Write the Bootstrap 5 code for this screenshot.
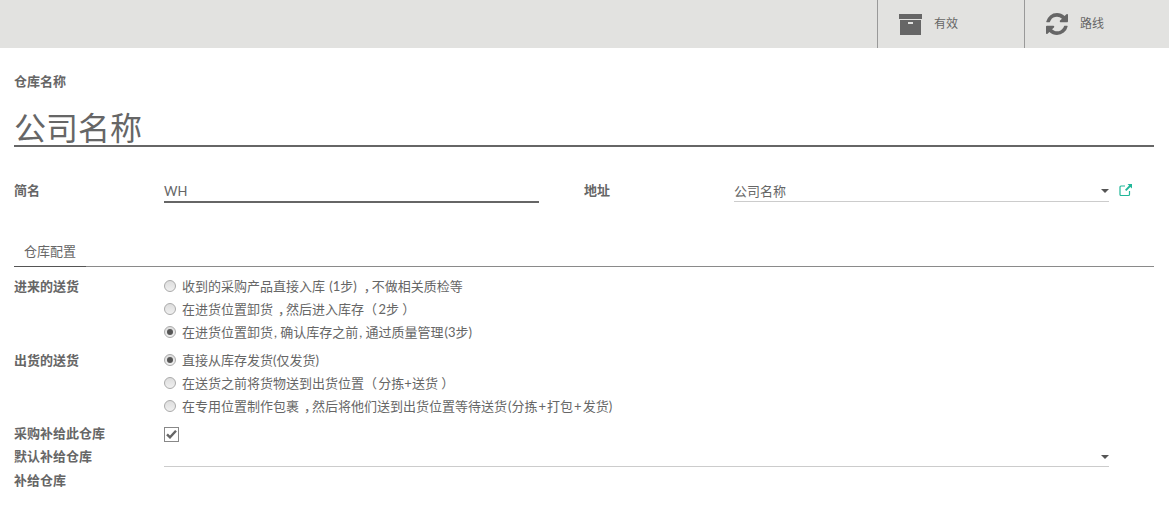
<!DOCTYPE html>
<html lang="zh">
<head>
<meta charset="utf-8">
<title>仓库</title>
<link href="https://cdn.jsdelivr.net/npm/bootstrap@5.3.0/dist/css/bootstrap.min.css" rel="stylesheet">
<style>
html,body{height:528px;overflow:hidden}
body{font-family:Lato,"Noto Sans CJK SC",sans-serif;font-size:13px;line-height:18px;color:#666;background:#fff}
.topbar{height:48px;background:#e2e2e0}
.stat{width:147px;height:48px;border-left:1px solid #999;padding-left:21px;gap:12px;color:#666;font-size:12px}
.stat-last{width:145px}
.sheet{padding:24px 15px 0 14px}
.cap{font-weight:700;height:18px}
.title{font-size:32px;line-height:40px;height:47px;margin-top:10px;padding-top:8px;border-bottom:2px solid #666;color:#666}
.pair{margin-top:33px;height:23px}
.lab{width:150px;flex:none;font-weight:700}
.pair .lab,.pair .lab2{padding-top:1px}
.lab2{width:150px;flex:none;font-weight:700;margin-left:45px}
.inp{width:375px;height:23px;border-bottom:2px solid #666;line-height:20px;padding-top:1px}
.sel{width:375px;height:22px;border-bottom:1px solid #ccc;line-height:20px;padding-top:1px;position:relative}
.arrow{position:absolute;right:0;top:9px;width:0;height:0;border-left:4px solid transparent;border-right:4px solid transparent;border-top:4px solid #555}
.ext{margin-left:10px;margin-top:3px}
.tabline{margin-top:27px;height:37px;border-bottom:1px solid #8a8a8a}
.tabitem{display:inline-block;width:72px;height:37px;padding:12px 0 0 10px;border-bottom:1px solid #555}
.opts{margin-top:7px}
.optrow{display:flex}
.optrow .lab{padding-top:3px}
.optlist{display:flex;flex-direction:column}
.opt{display:flex;align-items:center;height:23px;gap:6px}
.rad{width:12px;height:12px;border-radius:50%;border:1px solid #aaa;background:linear-gradient(#ddd,#f0f0f0);flex:none;display:flex;align-items:center;justify-content:center}
.rad-on::after{content:"";width:6px;height:6px;border-radius:50%;background:#555}
.gap1{margin-top:5px}
.chkrow{margin-top:6px;height:22px;display:flex;align-items:center}
.chkrow .lab,.rowb .lab,.rowc .lab{padding-bottom:2px}
.chk{width:15px;height:15px;border:1px solid #888;display:flex;align-items:center;justify-content:center;background:#fff}
.rowb{display:flex;height:24px;align-items:center}
.rowc{display:flex;height:24px;align-items:center}
.sel2{width:945px;height:22px;border-bottom:1px solid #ccc;position:relative;align-self:flex-start}
.sel2 .arrow{top:10px}
.cm{letter-spacing:-5px;margin-left:5px}
.cm1{letter-spacing:-5px;margin-left:6px}
.po{letter-spacing:-2px}
.wide{padding:0 1px}
.wd{padding-left:1px}
</style>
</head>
<body>
<div class="topbar d-flex justify-content-end overflow-hidden">
  <div class="stat d-flex align-items-center">
    <svg width="23" height="21" viewBox="0 0 23 21"><rect x="0" y="0" width="23" height="5" fill="#666"/><path d="M1 6h21v15H1z" fill="#666"/><rect x="9" y="8" width="5" height="2" fill="#e2e2e0"/></svg>
    <span>有效</span>
  </div>
  <div class="stat stat-last d-flex align-items-center">
    <svg width="22" height="22" viewBox="128 128 1536 1536"><path fill="#666" d="M1639 1056q0 5-1 7-64 268-268 434.500t-478 166.500q-146 0-282.500-55t-243.500-157l-129 129q-19 19-45 19t-45-19-19-45v-448q0-26 19-45t45-19h448q26 0 45 19t19 45-19 45l-137 137q71 66 161 102t187 36q134 0 250-65t186-179q11-17 53-117 8-23 30-23h192q13 0 22.500 9.500t9.500 22.500zm25-800v448q0 26-19 45t-45 19h-448q-26 0-45-19t-19-45 19-45l138-138q-148-137-349-137-134 0-250 65t-186 179q-11 17-53 117-8 23-30 23h-199q-13 0-22.500-9.500t-9.500-22.500v-7q65-268 270-434.500t480-166.500q146 0 284 55.500t245 156.500l130-129q19-19 45-19t45 19 19 45z"/></svg>
    <span>路线</span>
  </div>
</div>
<div class="sheet">
  <div class="cap">仓库名称</div>
  <div class="title">公司名称</div>
  <div class="pair d-flex">
    <div class="lab">简名</div>
    <div class="inp">WH</div>
    <div class="lab2">地址</div>
    <div class="sel">公司名称<span class="arrow"></span></div>
    <svg class="ext" width="14" height="14" viewBox="0 0 14 14"><path d="M10.500 8v3.500a1 1 0 0 1-1 1H2a1 1 0 0 1-1-1V4a1 1 0 0 1 1-1h4" fill="none" stroke="#21b799" stroke-width="1.200"/><path d="M8.500 1H13v4.500l-1.600-1.600L7.300 8 6 6.700l4.100-4.100z" fill="#21b799"/></svg>
  </div>
  <div class="tabline"><span class="tabitem">仓库配置</span></div>
  <div class="opts">
    <div class="optrow">
      <div class="lab">进来的送货</div>
      <div class="optlist">
        <div class="opt"><span class="rad"></span><span>收到的采购产品直接入库 <span class="wide">(1步)</span><span class="cm1">，</span>不做相关质检等</span></div>
        <div class="opt"><span class="rad"></span><span>在进货位置卸货<span class="cm">，</span>然后进入库存<span class="po">（</span> 2步 <span>）</span></span></div>
        <div class="opt"><span class="rad rad-on"></span><span>在进货位置卸货<span class="wd">,</span> 确认库存之前<span class="wd">,</span> 通过质量管理<span class="wd">(3步)</span></span></div>
      </div>
    </div>
    <div class="optrow gap1">
      <div class="lab">出货的送货</div>
      <div class="optlist">
        <div class="opt"><span class="rad rad-on"></span><span>直接从库存发货(仅发货)</span></div>
        <div class="opt"><span class="rad"></span><span>在送货之前将货物送到出货位置<span class="po">（</span> 分拣+送货 <span>）</span></span></div>
        <div class="opt"><span class="rad"></span><span>在专用位置制作包裹<span class="cm">，</span>然后将他们送到出货位置等待送货<span class="wd">(分拣</span><span class="wide">+</span>打包<span class="wide">+</span>发货)</span></div>
      </div>
    </div>
    <div class="chkrow">
      <div class="lab">采购补给此仓库</div>
      <span class="chk"><svg width="11" height="10" viewBox="0 0 11 10"><path d="M1 5.300 4 8.300 10 1.700" fill="none" stroke="#666" stroke-width="2.400"/></svg></span>
    </div>
    <div class="rowb">
      <div class="lab">默认补给仓库</div>
      <div class="sel2"><span class="arrow"></span></div>
    </div>
    <div class="rowc">
      <div class="lab">补给仓库</div>
    </div>
  </div>
</div>
<script src="https://cdn.jsdelivr.net/npm/bootstrap@5.3.0/dist/js/bootstrap.bundle.min.js"></script>
</body>
</html>
